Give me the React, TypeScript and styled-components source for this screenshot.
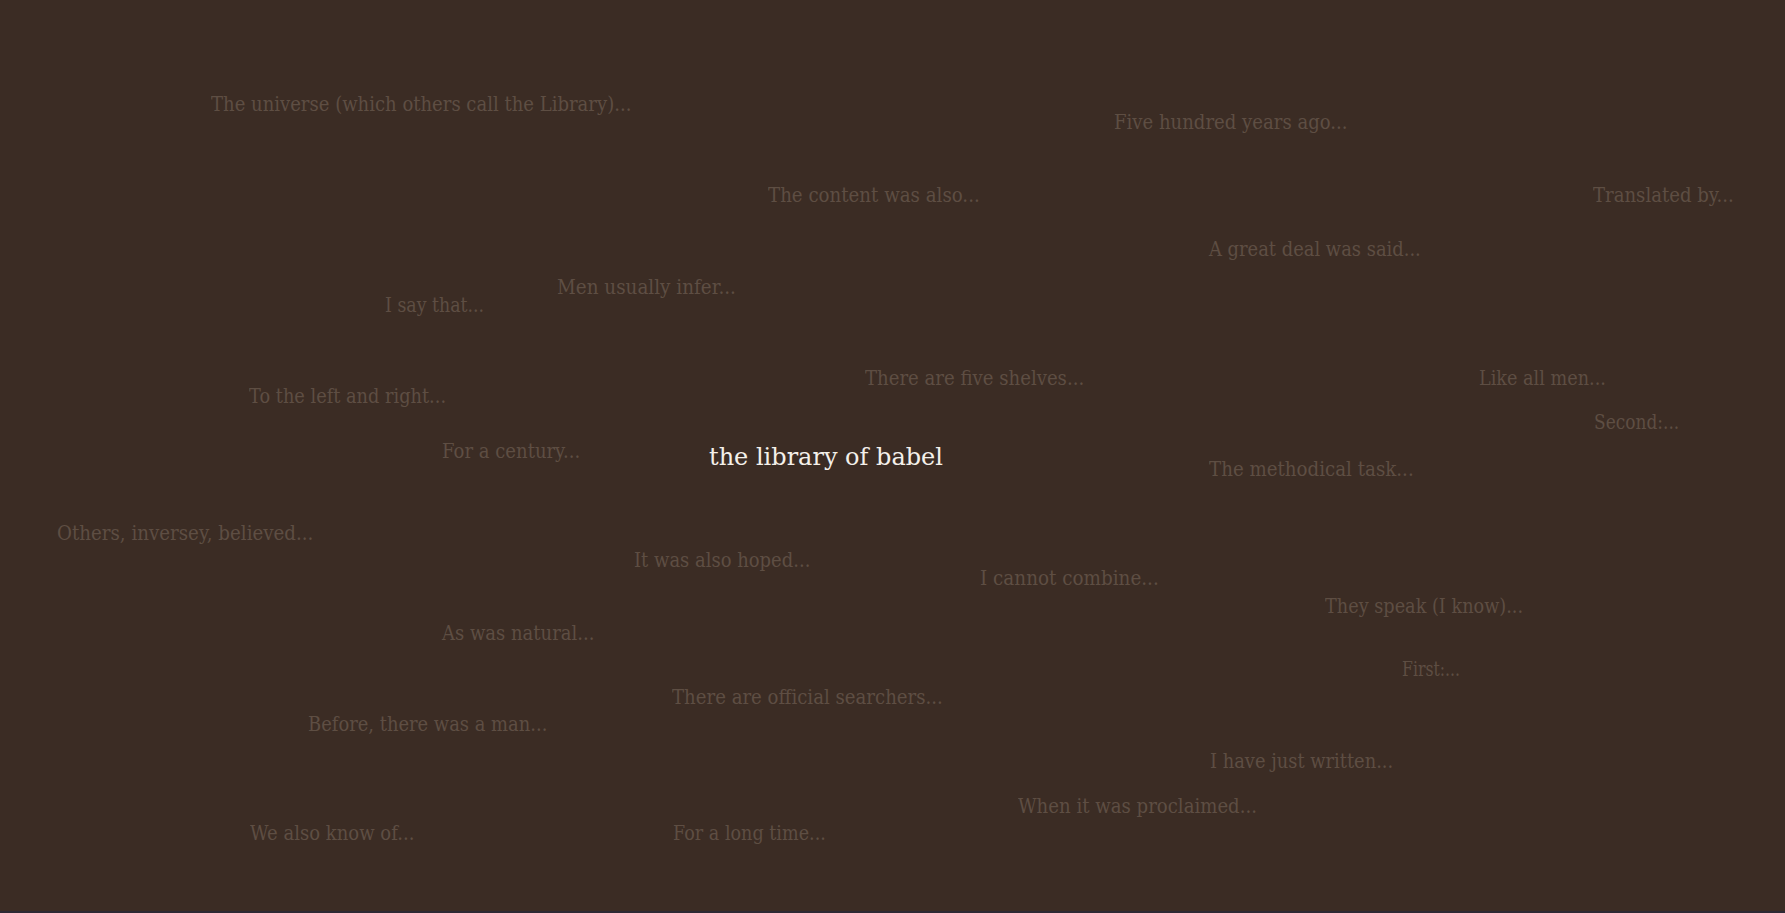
import React, { useLayoutEffect, useRef, useState } from 'react';
import styled, { createGlobalStyle } from 'styled-components';

interface Passage {
    text: string;
    x: number; // left edge
    y: number; // middle of the capitals
    w: number; // rendered width in the reference
}

const passages: Passage[] = [
    { text: 'The universe (which others call the Library)...', x: 211, y: 104, w: 420 },
    { text: 'Five hundred years ago...', x: 1114, y: 122, w: 234 },
    { text: 'The content was also...', x: 768, y: 195, w: 212 },
    { text: 'Translated by...', x: 1593, y: 195, w: 141 },
    { text: 'A great deal was said...', x: 1209, y: 249, w: 212 },
    { text: 'Men usually infer...', x: 557, y: 287, w: 179 },
    { text: 'I say that...', x: 385, y: 305, w: 99 },
    { text: 'There are five shelves...', x: 865, y: 378, w: 219 },
    { text: 'Like all men...', x: 1479, y: 378, w: 127 },
    { text: 'To the left and right...', x: 249, y: 396, w: 197 },
    { text: 'Second:...', x: 1594, y: 422, w: 85 },
    { text: 'For a century...', x: 442, y: 451, w: 138 },
    { text: 'The methodical task...', x: 1209, y: 469, w: 205 },
    { text: 'Others, inversey, believed...', x: 57, y: 533, w: 256 },
    { text: 'It was also hoped...', x: 634, y: 560, w: 176 },
    { text: 'I cannot combine...', x: 980, y: 578, w: 179 },
    { text: 'They speak (I know)...', x: 1325, y: 606, w: 198 },
    { text: 'As was natural...', x: 442, y: 633, w: 152 },
    { text: 'First:...', x: 1402, y: 669, w: 58 },
    { text: 'There are official searchers...', x: 672, y: 697, w: 271 },
    { text: 'Before, there was a man...', x: 308, y: 724, w: 239 },
    { text: 'I have just written...', x: 1210, y: 761, w: 183 },
    { text: 'When it was proclaimed...', x: 1018, y: 806, w: 239 },
    { text: 'We also know of...', x: 250, y: 833, w: 164 },
    { text: 'For a long time...', x: 673, y: 833, w: 153 },
];

const GlobalStyle = createGlobalStyle`
    html, body {
        margin: 0;
        padding: 0;
        background: #2d2934;
    }
`;

// squeeze/stretch a line of text so it covers the same width as the original
function useFitWidth<T extends HTMLElement>(target: number) {
    const ref = useRef<T>(null);
    const [scale, setScale] = useState(1);

    useLayoutEffect(() => {
        if (ref.current && ref.current.offsetWidth) {
            setScale(target / ref.current.offsetWidth);
        }
    }, [target]);

    return { ref, scale };
}

const PassageLink: React.FC<Passage> = ({ text, x, y, w }) => {
    const { ref, scale } = useFitWidth<HTMLAnchorElement>(w);

    return (
        <StyledPassage ref={ref} $x={x} $y={y} style={{ transform: `scaleX(${scale})` }}>
            {text}
        </StyledPassage>
    );
};

const Title: React.FC = () => {
    const { ref, scale } = useFitWidth<HTMLHeadingElement>(234);

    return (
        <StyledTitle ref={ref} style={{ transform: `scaleX(${scale})` }}>
            the library of babel
        </StyledTitle>
    );
};

export default function App() {
    return (
        <>
            <GlobalStyle />
            <Canvas>
                <Title />
                {passages.map(p => (
                    <PassageLink key={p.text} {...p} />
                ))}
            </Canvas>
        </>
    );
}

const Canvas = styled.main`
    position: relative;
    width: 100%;
    height: 911px;
    overflow: hidden;
    background-color: #3b2c24;
`;

const StyledPassage = styled.a<{ $x: number; $y: number }>`
    position: absolute;
    left: ${p => p.$x}px;
    top: ${p => p.$y - 12}px;
    font-family: "DejaVu Serif", "Liberation Serif", serif;
    font-size: 20px;
    line-height: 24px;
    color: #5e4e43;
    white-space: nowrap;
    text-decoration: none;
    transform-origin: left center;
    cursor: pointer;

    &:hover {
        color: #8a7868;
    }
`;

const StyledTitle = styled.h1`
    position: absolute;
    left: 709px;
    top: 442px;
    margin: 0;
    font-family: "DejaVu Serif", "Liberation Serif", serif;
    font-size: 24px;
    font-weight: 400;
    line-height: 30px;
    color: #f4f0ea;
    white-space: nowrap;
    transform-origin: left center;
`;
